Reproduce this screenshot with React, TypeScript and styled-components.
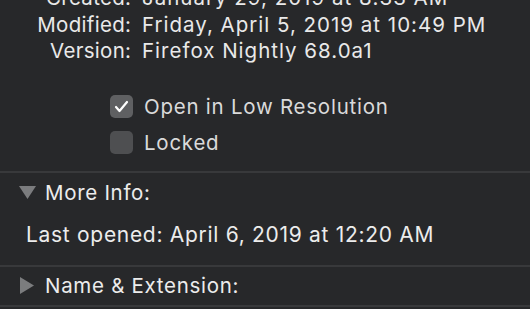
import React from 'react';
import styled, { createGlobalStyle } from 'styled-components';

const GlobalStyle = createGlobalStyle`
  html, body {
    margin: 0;
    padding: 0;
    background: #27282a;
    overflow: hidden;
  }
  body {
    font-family: Inter, "Liberation Sans", sans-serif;
    -webkit-font-smoothing: antialiased;
  }
`;

const Panel = styled.div`
  width: 530px;
  height: 309px;
  display: flex;
  flex-direction: column;
  color: #e9e9e9;
  overflow: hidden;
`;

const InfoGrid = styled.div`
  display: grid;
  grid-template-columns: 131px auto;
  column-gap: 11px;
  margin-top: -15px;
  font-size: 20.5px;
  line-height: 26.5px;
`;

const Label = styled.div`
  text-align: right;
  white-space: nowrap;
  letter-spacing: 0.3px;
  margin-right: -0.3px;
`;

const Value = styled.div`
  white-space: nowrap;
  letter-spacing: 1px;
`;

const Checks = styled.div`
  display: flex;
  flex-direction: column;
  padding: 24px 0 10px 110px;
`;

const CheckRow = styled.label`
  display: flex;
  align-items: center;
  gap: 11px;
  height: 36px;
  font-size: 20.5px;
  letter-spacing: 0.75px;
  color: #dadada;
`;

const Box = styled.span<{ $checked?: boolean }>`
  width: 23px;
  height: 23px;
  border-radius: 5px;
  box-sizing: border-box;
  background: ${(p) => (p.$checked ? '#5f6062' : '#4e4f51')};
  display: flex;
  align-items: center;
  justify-content: center;
`;

const Divider = styled.div`
  height: 2px;
  background: #38393b;
  flex-shrink: 0;
`;

const SectionHeader = styled.div<{ $h: number }>`
  display: flex;
  align-items: center;
  height: ${(p) => p.$h}px;
  padding-left: 18px;
  font-size: 20.5px;
  letter-spacing: 0.7px;
  color: #ececec;
`;

const Disclosure = styled.span`
  width: 18px;
  display: flex;
  justify-content: center;
  margin-right: 9px;
`;

const Detail = styled.div`
  display: flex;
  align-items: center;
  height: 44px;
  padding: 0 0 8px 26px;
  font-size: 21px;
  letter-spacing: 0.7px;
  color: #ececec;
  white-space: nowrap;
`;

function Triangle({ open }: { open: boolean }) {
  return open ? (
    <svg width="17" height="13" viewBox="0 0 17 13">
      <polygon points="0,0 17,0 8.5,13" fill="#7b7c7e" />
    </svg>
  ) : (
    <svg width="14" height="17" viewBox="0 0 14 17">
      <polygon points="0,0 14,8.5 0,17" fill="#7b7c7e" />
    </svg>
  );
}

function Check({ checked, label }: { checked?: boolean; label: string }) {
  return (
    <CheckRow>
      <Box $checked={checked}>
        {checked && (
          <svg width="15" height="13" viewBox="0 0 15 13">
            <polyline
              points="2,7 5.5,11 13,2"
              fill="none"
              stroke="#ffffff"
              strokeWidth="2.2"
              strokeLinecap="round"
              strokeLinejoin="round"
            />
          </svg>
        )}
      </Box>
      {label}
    </CheckRow>
  );
}

const rows = [
  ['Created:', 'January 29, 2019 at 8:33 AM'],
  ['Modified:', 'Friday, April 5, 2019 at 10:49 PM'],
  ['Version:', 'Firefox Nightly 68.0a1'],
];

export default function App() {
  return (
    <>
      <GlobalStyle />
      <Panel>
        <InfoGrid>
          {rows.map(([k, v]) => (
            <React.Fragment key={k}>
              <Label>{k}</Label>
              <Value>{v}</Value>
            </React.Fragment>
          ))}
        </InfoGrid>
        <Checks>
          <Check checked label="Open in Low Resolution" />
          <Check label="Locked" />
        </Checks>
        <Divider />
        <SectionHeader $h={40}>
          <Disclosure>
            <Triangle open />
          </Disclosure>
          More Info:
        </SectionHeader>
        <Detail>Last opened: April 6, 2019 at 12:20 AM</Detail>
        <Divider />
        <SectionHeader $h={38}>
          <Disclosure>
            <Triangle open={false} />
          </Disclosure>
          Name &amp; Extension:
        </SectionHeader>
        <Divider />
      </Panel>
    </>
  );
}
